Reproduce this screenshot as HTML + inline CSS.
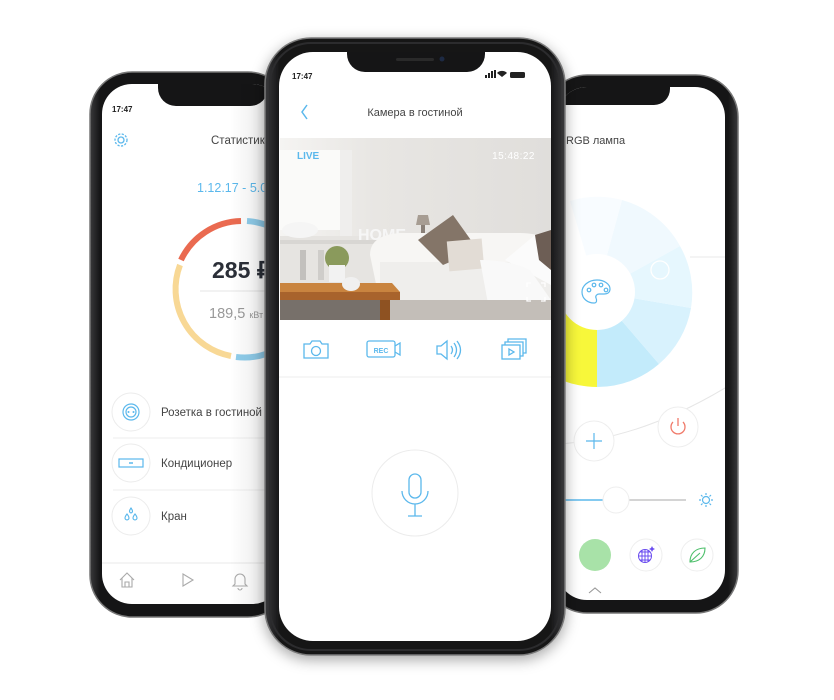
<!DOCTYPE html>
<html><head><meta charset="utf-8"><style>
html,body{margin:0;padding:0;background:#fff;width:834px;height:700px;overflow:hidden}
svg{display:block}
text{font-family:"Liberation Sans",sans-serif}
</style></head><body>
<svg width="834" height="700" viewBox="0 0 834 700" xmlns="http://www.w3.org/2000/svg">
<defs>
<clipPath id="lscr"><rect x="102" y="84" width="180" height="520" rx="30"/></clipPath>
<clipPath id="rscr"><rect x="557" y="87" width="168" height="513" rx="30"/></clipPath>
<clipPath id="photo"><rect x="280" y="138" width="271" height="182"/></clipPath>
<filter id="sh" x="-20%" y="-10%" width="140%" height="120%"><feDropShadow dx="0" dy="4" stdDeviation="7" flood-color="#000" flood-opacity="0.35"/></filter>
<linearGradient id="wall" x1="0" y1="0" x2="1" y2="0"><stop offset="0" stop-color="#f5f4f2"/><stop offset="0.35" stop-color="#e8e6e3"/><stop offset="1" stop-color="#e0dedb"/></linearGradient>
<linearGradient id="frame" x1="0" y1="0" x2="1" y2="0"><stop offset="0" stop-color="#3a3a3c"/><stop offset="0.05" stop-color="#151516"/><stop offset="0.95" stop-color="#151516"/><stop offset="1" stop-color="#3a3a3c"/></linearGradient>
<linearGradient id="lshade" x1="0" y1="0" x2="1" y2="0"><stop offset="0" stop-color="#000" stop-opacity="0"/><stop offset="1" stop-color="#000" stop-opacity="0.12"/></linearGradient>
</defs>

<!-- LEFT PHONE -->
<rect x="90" y="72" width="200" height="545" rx="42" fill="url(#frame)" stroke="#777" stroke-width="1.5"/>
<rect x="102" y="84" width="180" height="520" rx="30" fill="#fff"/>
<g clip-path="url(#lscr)">
<path d="M158,84 h110 v4 a18,18 0 0 1 -18,18 h-74 a18,18 0 0 1 -18,-18z" fill="#151516"/>
<text x="112" y="112" font-size="8" font-weight="bold" fill="#222">17:47</text>
<g fill="none" stroke="#5bb8ec" stroke-width="1.3"><circle cx="121" cy="140" r="3"/><circle cx="121" cy="140" r="6" stroke-dasharray="2.2 1.4"/></g>
<text x="211" y="144" font-size="11.5" fill="#444">Статистика</text>
<text x="197" y="192" font-size="12.5" fill="#5bb8ec">1.12.17 - 5.01.18</text>
<g fill="none" stroke-width="6">
<path d="M181,260 A68,68 0 0 1 241,221" stroke="#ea6a50"/>
<path d="M247,221 A68,68 0 0 1 311,289" stroke="#8fcdeb"/>
<path d="M180,265 A68,68 0 0 0 231,356" stroke="#f8d895"/>
<path d="M236,357 A68,68 0 0 0 305,320" stroke="#8fcdeb"/>
</g>
<text x="212" y="278" font-size="23" font-weight="bold" fill="#2b2f38">285 ₽</text>
<line x1="200" y1="291" x2="290" y2="291" stroke="#e5e5e5"/>
<text x="209" y="318" font-size="14.5" fill="#999">189,5 <tspan font-size="9">кВт</tspan></text>
<g fill="#fff" stroke="#ececec"><circle cx="131" cy="412" r="19"/><circle cx="131" cy="463" r="19"/><circle cx="131" cy="516" r="19"/></g>
<g fill="none" stroke="#5bb8ec" stroke-width="1.2"><circle cx="131" cy="412" r="8"/><circle cx="131" cy="412" r="5"/><rect x="119" y="459" width="24" height="8"/></g>
<circle cx="128.5" cy="412" r="1" fill="#5bb8ec"/><circle cx="133.5" cy="412" r="1" fill="#5bb8ec"/>
<line x1="129" y1="463" x2="133" y2="463" stroke="#5bb8ec" stroke-width="1.5"/>
<g fill="none" stroke="#5bb8ec" stroke-width="1.1"><path d="M131,508 q-3,4 0,5 q3,-1 0,-5z"/><path d="M127,514 q-4,5 0,6 q4,-1 0,-6z"/><path d="M135,514 q-4,5 0,6 q4,-1 0,-6z"/></g>
<text x="161" y="416" font-size="11.5" fill="#444">Розетка в гостиной</text>
<text x="161" y="467" font-size="11.5" fill="#444">Кондиционер</text>
<text x="161" y="520" font-size="11.5" fill="#444">Кран</text>
<line x1="113" y1="438" x2="290" y2="438" stroke="#eee"/>
<line x1="113" y1="490" x2="290" y2="490" stroke="#eee"/>
<line x1="102" y1="563" x2="290" y2="563" stroke="#e8e8e8"/>
<g fill="none" stroke="#aaa" stroke-width="1.1"><path d="M120,580 l7,-7 l7,7 M122,578 v9 h10 v-9 M125,587 v-5 h4 v5"/><path d="M183,574 l10,6 l-10,6z"/><path d="M235,584 v-5 a5,5 0 0 1 10,0 v5 l2,2 h-14z M238,588 a2,2 0 0 0 4,0"/></g>
<rect x="230" y="84" width="52" height="520" fill="url(#lshade)"/>
</g>

<!-- RIGHT PHONE -->
<rect x="545" y="75" width="193" height="538" rx="42" fill="url(#frame)" stroke="#777" stroke-width="1.5"/>
<rect x="557" y="87" width="168" height="513" rx="30" fill="#fff"/>
<g clip-path="url(#rscr)">
<path d="M540,87 h130 v2 a16,16 0 0 1 -16,16 h-114z" fill="#151516"/>
<text x="566" y="144" font-size="11" fill="#444">RGB лампа</text>
<path d="M690,257 H725" stroke="#e8e8e8" fill="none"/>
<path d="M557,444 Q640,440 730,385" stroke="#e6e6e6" fill="none"/>
<path d="M597,292 L597,387 A95,95 0 0 1 502,292z" fill="#f7f73a"/>
<path d="M597,292 L597,387 A95,95 0 0 0 659,364z" fill="#c3ebfb"/>
<path d="M597,292 L659,364 A95,95 0 0 0 691,308z" fill="#d8f2fd"/>
<path d="M597,292 L691,308 A95,95 0 0 0 680,246z" fill="#e6f7fe"/>
<path d="M597,292 L680,246 A95,95 0 0 0 622,200z" fill="#f0f9fe"/>
<path d="M597,292 L622,200 A95,95 0 0 0 570,201z" fill="#f8fcff"/>
<circle cx="597" cy="292" r="38" fill="#fff"/>
<circle cx="660" cy="270" r="9" fill="none" stroke="#fff" stroke-width="1.3"/>
<g fill="none" stroke="#5bb8ec" stroke-width="1.2"><path d="M597,280 c-9,0 -15,6 -15,12 c0,7 6,11 12,11 c3,0 3,-3 2,-5 c-1,-2 1,-4 3,-4 h5 c4,0 6,-2 6,-5 c0,-5 -6,-9 -13,-9z"/><circle cx="589" cy="290" r="1.8"/><circle cx="594" cy="285" r="1.8"/><circle cx="601" cy="285" r="1.8"/><circle cx="606" cy="290" r="1.8"/></g>
<g fill="#fff" stroke="#eee"><circle cx="594" cy="441" r="20"/><circle cx="678" cy="427" r="20"/></g>
<path d="M594,433 v16 M586,441 h16" stroke="#5bb8ec" stroke-width="1.2"/>
<g fill="none" stroke="#f07a6a" stroke-width="1.3"><path d="M673,422 a7,7 0 1 0 10,0"/><path d="M678,418 v8"/></g>
<line x1="557" y1="500" x2="604" y2="500" stroke="#5bb8ec" stroke-width="1.5"/>
<line x1="628" y1="500" x2="686" y2="500" stroke="#bbb" stroke-width="1.2"/>
<circle cx="616" cy="500" r="13" fill="#fff" stroke="#eee"/>
<g stroke="#5bb8ec" stroke-width="1.2" fill="none"><circle cx="706" cy="500" r="3.5"/><path d="M706,493 v2 M706,505 v2 M699,500 h2 M711,500 h2 M701,495 l1.5,1.5 M709.5,503.5 l1.5,1.5 M701,505 l1.5,-1.5 M709.5,496.5 l1.5,-1.5"/></g>
<circle cx="595" cy="555" r="16" fill="#a8e2a8"/>
<g fill="#fff" stroke="#eee"><circle cx="646" cy="555" r="16"/><circle cx="697" cy="555" r="16"/></g>
<g fill="none" stroke="#6a4cf0" stroke-width="1"><circle cx="645" cy="556" r="6.5"/><path d="M638.5,556 h13 M645,549.5 v13 M640,552 h10 M640,560 h10 M642,550.5 v11 M648,550.5 v11"/></g>
<path d="M651,548 l1,-2 l1,2 l2,1 l-2,1 l-1,2 l-1,-2 l-2,-1z" fill="#6a4cf0"/>
<g fill="none" stroke="#4cbf6a" stroke-width="1.1"><path d="M690,562 c0,-9 6,-14 15,-14 c0,9 -6,14 -15,14z M690,562 l10,-9"/></g>
<path d="M589,593 l6,-5 l6,5" fill="none" stroke="#999" stroke-width="1.1"/>
</g>

<!-- CENTER PHONE -->
<g filter="url(#sh)">
<rect x="265" y="38" width="300" height="617" rx="46" fill="url(#frame)" stroke="#7a7a7a" stroke-width="1.5"/>
</g>
<rect x="270" y="43" width="290" height="607" rx="41" fill="none" stroke="#2c2c2e" stroke-width="2"/>
<rect x="279" y="52" width="272" height="589" rx="34" fill="#fff"/>
<path d="M347,52 h138 v2 a18,18 0 0 1 -18,18 h-102 a18,18 0 0 1 -18,-18z" fill="#151516"/>
<rect x="396" y="58" width="38" height="3" rx="1.5" fill="#2a2a2a"/>
<circle cx="442" cy="59" r="2.5" fill="#1d2a44"/>
<text x="292" y="79" font-size="8" font-weight="bold" fill="#222">17:47</text>
<g fill="#222"><rect x="485" y="75" width="2" height="3"/><rect x="488" y="73" width="2" height="5"/><rect x="491" y="71" width="2" height="7"/><rect x="494" y="70" width="2" height="8"/>
<path d="M502,77 l-5,-4 a7,7 0 0 1 10,0z"/><rect x="510" y="72" width="15" height="6" rx="1.5"/></g>
<path d="M307,105 l-5,7 l5,7" fill="none" stroke="#5bb8ec" stroke-width="1.5"/>
<text x="415" y="116" font-size="11" fill="#444" text-anchor="middle">Камера в гостиной</text>
<g clip-path="url(#photo)">
<rect x="280" y="138" width="271" height="182" fill="url(#wall)"/>
<rect x="280" y="150" width="60" height="80" fill="#fafaf9"/>
<rect x="340" y="150" width="12" height="90" fill="#efeeed"/>
<rect x="280" y="236" width="140" height="50" fill="#e6e4e1"/>
<rect x="280" y="240" width="140" height="4" fill="#d8d6d3"/>
<rect x="300" y="250" width="6" height="30" fill="#c2c0bd"/>
<rect x="318" y="250" width="6" height="30" fill="#cfcdca"/>
<text x="358" y="240" font-size="16" font-family="Liberation Serif" fill="#f6f6f6" font-weight="bold">HOME</text>
<path d="M418,215 h10 l2,10 h-14z" fill="#a79d93"/><rect x="421" y="225" width="4" height="12" fill="#8a8078"/>
<ellipse cx="300" cy="230" rx="18" ry="8" fill="#f5f5f5"/>
<path d="M370,255 q0,-20 30,-22 h120 q31,0 31,20 v50 h-171z" fill="#f7f6f4"/>
<path d="M380,262 h171 v38 h-171z" fill="#efeeec"/>
<path d="M418,240 l35,-25 l25,35 l-35,15z" fill="#847568"/>
<rect x="448" y="240" width="35" height="30" fill="#e2dcd5" transform="rotate(-5 465 255)"/>
<path d="M505,260 l30,-25 l16,10 v40z" fill="#fbfbfb"/>
<path d="M535,235 l16,-5 v40 l-12,-10z" fill="#6d5e55"/>
<path d="M480,260 q30,0 50,10 l21,30 v20 h-60z" fill="#f9f9f9"/>
<circle cx="337" cy="258" r="12" fill="#8a9a5c"/><rect x="329" y="265" width="16" height="17" fill="#f2f2f2"/>
<path d="M280,283 h112 l8,9 h-120z" fill="#c9843f"/>
<rect x="280" y="292" width="120" height="8" fill="#a8632c"/>
<rect x="380" y="300" width="10" height="20" fill="#8e5222"/>
<rect x="280" y="300" width="100" height="20" fill="#77706a"/>
<rect x="390" y="300" width="161" height="20" fill="#c3beb8"/>
<ellipse cx="351" cy="284" rx="9" ry="7" fill="#f0f0f0"/>
<path d="M527,287 v-4 h4 M541,283 h4 v4 M545,297 v4 h-4 M531,301 h-4 v-4" fill="none" stroke="#fff" stroke-width="1.3"/>
</g>
<text x="297" y="159" font-size="10" font-weight="bold" fill="#5bb8ec">LIVE</text>
<text x="535" y="159" font-size="10" fill="#fff" text-anchor="end" letter-spacing="0.5">15:48:22</text>
<g fill="none" stroke="#5bb8ec" stroke-width="1.3">
<path d="M304,344 h6 l2,-3 h8 l2,3 h6 v14 h-24z"/><circle cx="316" cy="351" r="4.5"/>
<rect x="367" y="341" width="28" height="16" rx="2"/><path d="M395,346 l5,-3 v12 l-5,-3"/>
<path d="M437,346 h4 l6,-5 v18 l-6,-5 h-4z"/><path d="M451,346 q3,4 0,8 M454,343 q5,7 0,14 M457,341 q7,9 0,18"/>
<rect x="502" y="345" width="18" height="14"/><path d="M505,345 v-3 h18 v14 h-3 M508,342 v-3 h18 v14 h-3"/><path d="M509,349 l5,3 l-5,3z"/>
</g>
<text x="381" y="353" font-size="7" font-weight="bold" fill="#5bb8ec" text-anchor="middle">REC</text>
<line x1="279" y1="377" x2="551" y2="377" stroke="#eee"/>
<circle cx="415" cy="493" r="43" fill="#fff" stroke="#ececec"/>
<g fill="none" stroke="#5bb8ec" stroke-width="1.3"><rect x="409" y="474" width="12" height="24" rx="6"/><path d="M402,491 a13,13 0 0 0 26,0 M415,504 v12 M408,516 h14"/></g>
</svg>
</body></html>
